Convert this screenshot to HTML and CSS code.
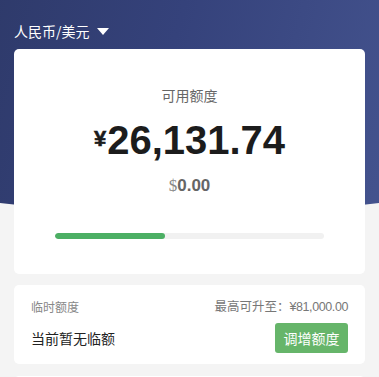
FILE: index.html
```html
<!DOCTYPE html>
<html lang="zh">
<head>
<meta charset="utf-8">
<link rel="stylesheet" href="styles.css">
</head>
<body>
<div class="page">
  <div class="hero-bg"></div>
  <div class="currency">人民币/美元 <span class="caret"></span></div>
  <div class="card main">
    <div class="label">可用额度</div>
    <div class="amount"><span class="yen">¥</span>26,131.74</div>
    <div class="usd"><span class="dollar">$</span>0.00</div>
    <div class="bar"><div class="fill" style="width:41%"></div></div>
  </div>
  <div class="card temp">
    <div class="row">
      <span class="muted">临时额度</span>
      <span class="max">最高可升至：<span class="num">¥81,000.00</span></span>
    </div>
    <div class="row">
      <span class="none">当前暂无临额</span>
      <button class="btn">调增额度</button>
    </div>
  </div>
  <div class="card next"></div>
</div>
</body>
</html>
```
FILE: styles.css
```css
html, body {
  margin: 0;
  padding: 0;
}
body {
  background: #f4f4f4;
  font-family: "Liberation Sans", "Noto Sans CJK SC", sans-serif;
  overflow: hidden;
}
.page {
  position: relative;
  padding: 0 14px;
  height: 377px;
  overflow: hidden;
}
.hero-bg {
  position: absolute;
  top: 0;
  left: calc(50% - 300px);
  width: 600px;
  height: 212px;
  border-radius: 0 0 300px 300px / 0 0 40px 40px;
  background: linear-gradient(105deg, #2b3662 0%, #35427b 45%, #4a5a96 100%);
  z-index: 0;
}
.currency, .card {
  position: relative;
  z-index: 1;
}
.currency {
  padding-top: 21px;
  height: 20px;
  line-height: 20px;
  color: #fff;
  font-size: 14px;
  font-family: "Noto Sans CJK SC", sans-serif;
  display: flex;
  align-items: center;
}
.caret {
  display: inline-block;
  width: 0;
  height: 0;
  border-left: 6.5px solid transparent;
  border-right: 6.5px solid transparent;
  border-top: 7px solid #fff;
  margin-left: 7px;
}
.card {
  background: #fff;
  border-radius: 5px;
}
.main {
  margin-top: 8px;
  padding: 36px 0 35px;
  display: flex;
  flex-direction: column;
  align-items: center;
}
.label {
  font-family: "Noto Sans CJK SC", sans-serif;
  font-size: 14px;
  line-height: 20px;
  color: #666;
}
.amount {
  margin-top: 12px;
  font-size: 40px;
  line-height: 46px;
  font-weight: bold;
  color: #1c1c1c;
  display: flex;
  align-items: center;
}
.yen {
  font-size: 22px;
  font-weight: 900;
  margin-right: 1px;
  position: relative;
  top: -1px;
  -webkit-text-stroke: 0.6px #1c1c1c;
}
.usd {
  margin-top: 11px;
  font-size: 17px;
  line-height: 24px;
  font-weight: bold;
  color: #666;
}
.dollar {
  font-family: "Liberation Serif", serif;
  font-weight: normal;
  color: #888;
}
.bar {
  margin-top: 35px;
  width: 269px;
  height: 6px;
  background: #f1f1f1;
  border-radius: 3px;
  overflow: hidden;
}
.fill {
  height: 100%;
  background: #4caf64;
  border-radius: 3px;
}
.temp {
  margin-top: 11px;
  padding: 12px 17px 11px 17px;
  display: flex;
  flex-direction: column;
  gap: 7px;
}
.row {
  display: flex;
  justify-content: space-between;
  align-items: center;
}
.muted {
  font-family: "Noto Sans CJK SC", sans-serif;
  font-size: 12px;
  line-height: 18px;
  color: #888;
}
.max {
  font-family: "Noto Sans CJK SC", sans-serif;
  font-size: 12.5px;
  line-height: 18px;
  color: #777;
}
.num {
  font-family: "Liberation Sans", sans-serif;
  font-size: 12.5px;
  letter-spacing: -0.4px;
}
.none {
  font-family: "Noto Sans CJK SC", sans-serif;
  font-size: 14px;
  color: #222;
}
.btn {
  border: none;
  background: #66b56a;
  color: #fff;
  font-family: "Noto Sans CJK SC", sans-serif;
  font-size: 14px;
  width: 73px;
  height: 30px;
  border-radius: 3px;
  padding: 0;
}
.next {
  margin-top: 12px;
  height: 40px;
}
```
